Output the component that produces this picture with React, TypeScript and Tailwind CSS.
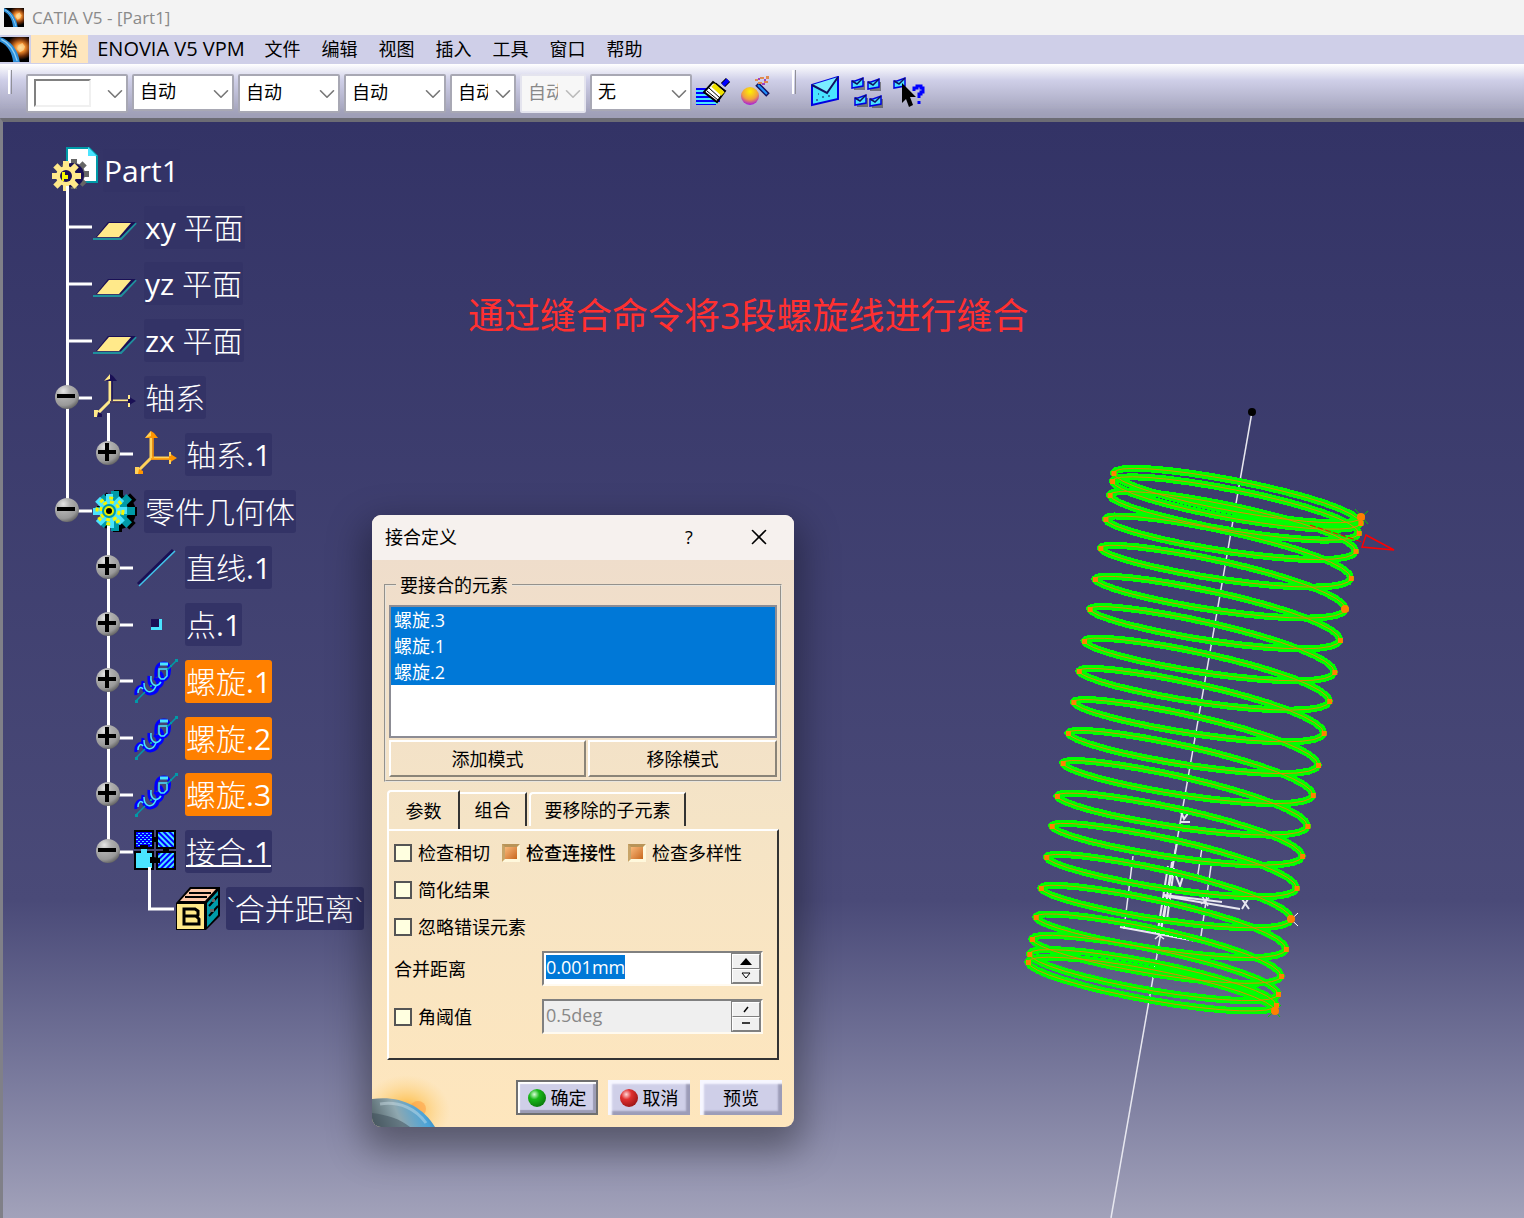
import React, { useEffect, useRef } from 'react';
import { ChevronDown, X } from 'lucide-react';
import clsx from 'clsx';

const MENU_ITEMS = ['文件', '编辑', '视图', '插入', '工具', '窗口', '帮助'];

type IconName = 'plane' | 'axis' | 'axisActive' | 'body' | 'line' | 'point' | 'helix' | 'join' | 'param' | 'part';

interface TreeNode {
  text: string;
  suffix?: string;
  prefix?: string;
  icon: IconName;
  // one entry per indent column, drawn left to right
  guides: ('full' | 'half' | 'none')[];
  toggle?: 'plus' | 'minus';
  opens?: boolean;
  selected?: boolean;
  underline?: boolean;
}

const TREE: TreeNode[] = [
  { text: '', prefix: 'Part1', icon: 'part', guides: [], opens: true },
  { prefix: 'xy ', text: '平面', icon: 'plane', guides: ['full'] },
  { prefix: 'yz ', text: '平面', icon: 'plane', guides: ['full'] },
  { prefix: 'zx ', text: '平面', icon: 'plane', guides: ['full'] },
  { text: '轴系', icon: 'axis', guides: ['full'], toggle: 'minus', opens: true },
  { text: '轴系', suffix: '.1', icon: 'axisActive', guides: ['full', 'half'], toggle: 'plus' },
  { text: '零件几何体', icon: 'body', guides: ['half'], toggle: 'minus', opens: true },
  { text: '直线', suffix: '.1', icon: 'line', guides: ['none', 'full'], toggle: 'plus' },
  { text: '点', suffix: '.1', icon: 'point', guides: ['none', 'full'], toggle: 'plus' },
  { text: '螺旋', suffix: '.1', icon: 'helix', guides: ['none', 'full'], toggle: 'plus', selected: true },
  { text: '螺旋', suffix: '.2', icon: 'helix', guides: ['none', 'full'], toggle: 'plus', selected: true },
  { text: '螺旋', suffix: '.3', icon: 'helix', guides: ['none', 'full'], toggle: 'plus', selected: true },
  { text: '接合', suffix: '.1', icon: 'join', guides: ['none', 'half'], toggle: 'minus', opens: true, underline: true },
  { text: '`合并距离`', icon: 'param', guides: ['none', 'none', 'half'] },
];

const AppLogo = ({ className }: { className?: string }) => (
  <svg viewBox="0 0 22 21" className={className} preserveAspectRatio="none" aria-hidden="true">
    <defs>
      <radialGradient id="sun" cx="0.7" cy="0.42" r="0.5">
        <stop offset="0" stopColor="#fff3c4" />
        <stop offset="0.35" stopColor="#f08a2c" />
        <stop offset="0.7" stopColor="#6b2c08" />
        <stop offset="1" stopColor="#000" />
      </radialGradient>
    </defs>
    <rect width="22" height="21" fill="#000" />
    <rect width="22" height="21" fill="url(#sun)" />
    <path d="M0 4 C6 6 10 12 12 21 L0 21Z" fill="#000" />
    <path d="M0 0 C8 3 14 11 15 21 L10 21 C9 13 6 7 0 4Z" fill="#2f8fd8" />
    <path d="M1 2 C7 5 11 12 13 20" stroke="#8fd0f5" fill="none" />
    <path d="M14 7l3-2 2 3-1 3-3 2-2-3z" fill="#ffd890" opacity="0.7" />
  </svg>
);

const gearTeeth = [0, 45, 90, 135, 180, 225, 270, 315];

const PartIcon = () => (
  <svg width="46" height="46" viewBox="0 0 46 46" className="-mt-1 shrink-0" aria-hidden="true">
    <path d="M15 3H37L45 11V37H15Z" fill="#fff" stroke="#009aa8" strokeWidth="2" />
    <path d="M36 2V11H45Z" fill="#4ae4ff" />
    <g fill="#666">
      <circle cx="22" cy="29" r="11" />
      {gearTeeth.map((a) => (
        <rect key={a} x="19" y="14" width="6" height="8" transform={`rotate(${a} 22 29)`} />
      ))}
    </g>
    <circle cx="20" cy="30" r="12" fill="#1a1055" />
    <g fill="#ffe98a">
      <circle cx="14" cy="31" r="10" />
      {gearTeeth.map((a) => (
        <rect key={a} x="11" y="16" width="6" height="8" transform={`rotate(${a} 14 31)`} />
      ))}
    </g>
    <circle cx="14" cy="31" r="6" fill="#1a1055" />
    <path d="M10 27h3v3h3v4h-4v2h-2z" fill="#f5f500" />
  </svg>
);

const AxisIcon = ({ main, tip }: { main: string; tip: string }) => (
  <svg width="43" height="45" viewBox="0 0 43 45" className="-mt-1 shrink-0" aria-hidden="true">
    <path d="M17 5V28H36M17 28L5 40" stroke={main} strokeWidth="3" fill="none" />
    <path d="M19 8V28M17 29H36" stroke={tip} strokeWidth="1.5" fill="none" />
    <path d="M11 8L15 3L17 1L20 3L24 8Z" fill={tip} />
    <path d="M11 8L17 1V6Z" fill={main} />
    <path d="M35 22V34L38 31L43 28L38 25Z" fill={tip} />
    <path d="M35 22h2v4h-2zM35 30h2v4h-2z" fill={main} />
    <path d="M1 37H5V44H1Z" fill={main} />
    <path d="M5 39L9 41V44H4Z" fill={tip} />
  </svg>
);

const BodyIcon = () => (
  <svg width="44" height="44" viewBox="0 0 44 44" className="shrink-0" aria-hidden="true">
    <g fill="#000">
      <circle cx="26" cy="23" r="17" />
      {gearTeeth.map((a) => (
        <rect key={a} x="21" y="1" width="9" height="10" transform={`rotate(${a} 25 22)`} />
      ))}
    </g>
    <g fill="#009aa8">
      <circle cx="21" cy="22" r="14" />
      {gearTeeth.map((a) => (
        <rect key={a} x="18" y="2" width="8" height="9" transform={`rotate(${a} 22 22)`} />
      ))}
    </g>
    <g fill="#4ae4ff">
      <circle cx="17" cy="22" r="11" />
      {gearTeeth.map((a) => (
        <rect key={a} x="13" y="5" width="7" height="9" transform={`rotate(${a} 17 22)`} />
      ))}
    </g>
    <circle cx="17" cy="22" r="13" fill="none" stroke="#f5f500" strokeWidth="3" strokeDasharray="4 6" />
    <circle cx="17" cy="22" r="9" fill="none" stroke="#f5f500" strokeWidth="3" strokeDasharray="4 3" />
    <circle cx="16" cy="22" r="7" fill="#009aa8" />
    <circle cx="16" cy="22" r="5" fill="#e8f000" />
    <circle cx="16" cy="22" r="3" fill="#000" />
  </svg>
);

const HelixIcon = () => (
  <svg width="44" height="44" viewBox="0 0 44 44" className="shrink-0" aria-hidden="true">
    <g fill="none" stroke="#0000ff" strokeWidth="3">
      <path d="M2 36C1 30 5 26 9 28" />
      <path d="M9 22C7 32 14 37 20 34C26 31 25 22 20 19" />
      <path d="M15 17C14 27 19 31 25 28C30 25 30 17 26 13" />
      <path d="M22 18C21 8 24 4 30 4C36 4 36 10 35 15C33 22 26 23 23 19" />
    </g>
    <g fill="none" stroke="#4ae4ff" strokeWidth="1.5">
      <path d="M4 34C4 29 7 27 9 30" />
      <path d="M10 24C10 34 18 36 22 27" />
      <path d="M17 17C16 27 23 29 27 23" />
      <path d="M25 10H33V17L30 20H27L25 18Z" />
      <path d="M26 5H34" strokeWidth="3" />
    </g>
    <path d="M2 42L11 33M33 11L43 1" stroke="#009aa8" strokeWidth="1.5" />
    <path d="M1 41h3v3h-3zM41 0h3v3h-3zM36 6h2v2h-2zM16 26h2v2h-2z" fill="#009aa8" />
  </svg>
);

const JoinIcon = () => (
  <svg width="42" height="42" viewBox="0 0 42 42" className="-mt-1 shrink-0" aria-hidden="true">
    <defs>
      <pattern id="hatch" width="4" height="4" patternUnits="userSpaceOnUse" patternTransform="rotate(45)">
        <rect width="4" height="4" fill="#0000ff" />
        <rect width="2" height="4" fill="#4ae4ff" />
      </pattern>
      <pattern id="hatchBack" width="4" height="4" patternUnits="userSpaceOnUse" patternTransform="rotate(-45)">
        <rect width="4" height="4" fill="#0000ff" />
        <rect width="2" height="4" fill="#4ae4ff" />
      </pattern>
      <pattern id="dots" width="4" height="4" patternUnits="userSpaceOnUse">
        <rect width="4" height="4" fill="#0000ff" />
        <rect width="2" height="1" fill="#4ae4ff" />
        <rect x="2" y="2" width="2" height="1" fill="#4ae4ff" />
      </pattern>
    </defs>
    <g stroke="#000" strokeWidth="2">
      <rect x="1" y="2" width="18" height="17" fill="url(#dots)" />
      <rect x="23" y="2" width="18" height="17" fill="url(#hatchBack)" />
      <rect x="1" y="23" width="18" height="17" fill="#4ae4ff" />
      <rect x="23" y="23" width="18" height="17" fill="url(#hatch)" />
    </g>
    <path d="M19 8h4v5h-4zM19 28h-3v6h10v-5zM29 19h6v4h-6z" fill="#000" />
    <path d="M7 20h6v5h-6z" fill="#4ae4ff" />
    <path d="M6 16h8v4h-8z" fill="#000" />
  </svg>
);

const ParamIcon = () => (
  <svg width="45" height="45" viewBox="0 0 45 45" className="shrink-0" aria-hidden="true">
    <path d="M1 17L15 1H45V30L31 44H1Z" fill="#000" />
    <path d="M5 15L16 3H41L30 15Z" fill="#ffc8a8" />
    <path d="M14 7H36M10 11H32" stroke="#000" strokeWidth="2" />
    <path d="M32 17L43 5V29L32 41Z" fill="#009aa8" />
    <path d="M34 20L43 10M34 30L43 20" stroke="#000" strokeWidth="2" />
    <path d="M35 23h4v3h-4zM37 13h3v3h-3z" fill="#666" />
    <rect x="2" y="18" width="27" height="25" fill="#ffe98a" />
    <path d="M9 23H20L23 25V29L22 31L24 33V38H9Z" fill="none" stroke="#000" strokeWidth="3" />
    <path d="M10 30H22" stroke="#000" strokeWidth="3" />
  </svg>
);

const TreeIcon = ({ name }: { name: IconName }) => {
  switch (name) {
    case 'part':
      return <PartIcon />;
    case 'axis':
      return <AxisIcon main="#ffe98a" tip="#1a1055" />;
    case 'axisActive':
      return <AxisIcon main="#ffd25a" tip="#ff9500" />;
    case 'body':
      return <BodyIcon />;
    case 'helix':
      return <HelixIcon />;
    case 'join':
      return <JoinIcon />;
    case 'param':
      return <ParamIcon />;
    case 'plane':
      return (
        <svg width="44" height="20" viewBox="0 0 44 20" className="mt-2 shrink-0" aria-hidden="true">
          <path d="M0 18H28L43 2" stroke="#1f8f9c" strokeWidth="2" fill="none" />
          <path d="M3 16L15 1H43L28 16Z" fill="#1a1055" />
          <path d="M4 16L16 2H38L26 16Z" fill="#ffe98a" />
        </svg>
      );
    case 'line':
      return (
        <svg width="43" height="44" viewBox="0 0 43 44" className="shrink-0" aria-hidden="true">
          <path d="M4 38L39 4" stroke="#1a1055" strokeWidth="3" />
          <path d="M5 40L41 5" stroke="#3fc4ea" strokeWidth="1.5" />
        </svg>
      );
    case 'point':
      return (
        <svg width="43" height="44" viewBox="0 0 43 44" className="shrink-0" aria-hidden="true">
          <rect x="17" y="16" width="11" height="11" fill="#4ae4ff" />
          <rect x="17" y="16" width="8" height="8" fill="#1a1055" />
        </svg>
      );
  }
};

const Toggle = ({ kind, label }: { kind: 'plus' | 'minus'; label: string }) => (
  <button aria-label={label} className="absolute left-2 top-1/2 -mt-px size-6 -translate-y-1/2">
    <svg viewBox="0 0 24 24" aria-hidden="true">
      <defs>
        <radialGradient id="ball" cx="0.35" cy="0.25" r="0.8">
          <stop offset="0" stopColor="#e6e6e6" />
          <stop offset="0.35" stopColor="#b0b0b0" />
          <stop offset="0.75" stopColor="#999" />
          <stop offset="1" stopColor="#606060" />
        </radialGradient>
      </defs>
      <circle cx="12" cy="12" r="12" fill="url(#ball)" />
      <path d={kind === 'plus' ? 'M2 11H20M11 2V20' : 'M2 11H20'} stroke="#000" strokeWidth="4" />
    </svg>
  </button>
);

const TreeRow = ({ node }: { node: TreeNode }) => {
  const last = node.guides.length - 1;
  const name = `${node.prefix ?? ''}${node.text}${node.suffix ?? ''}`;
  return (
    <li className="flex flex-1 items-center">
      {node.guides.map((guide, i) => (
        <span key={i} className="relative w-[41px] shrink-0 self-stretch">
          {guide !== 'none' && (
            <span className={clsx('absolute left-[19px] top-0 w-[3px] bg-white', guide === 'full' ? 'h-full' : 'h-1/2')} />
          )}
          {i === last && (
            <span className="absolute left-[19px] top-1/2 h-[3px] w-[26px] -translate-y-1/2 bg-white" />
          )}
          {i === last && node.toggle && <Toggle kind={node.toggle} label={name} />}
        </span>
      ))}
      <span className="relative flex w-[50px] shrink-0 items-center self-stretch pl-[5px]">
        <TreeIcon name={node.icon} />
        {node.opens && <span className="absolute bottom-0 left-[19px] h-[13px] w-[3px] bg-white" />}
      </span>
      <span className="w-[6px] shrink-0" />
      <span
        className={clsx(
          'h-[43px] whitespace-pre rounded-[3px] px-px text-[30px] leading-[43px] font-light text-white',
          node.selected ? 'bg-[#ff8000]' : 'bg-[#333366]',
          node.underline && 'underline decoration-2 underline-offset-2'
        )}
      >
        {node.prefix && <span className="font-normal">{node.prefix}</span>}
        {node.text}
        {node.suffix && <span className="font-normal">{node.suffix}</span>}
      </span>
    </li>
  );
};

// x extremes of every turn on screen, top to bottom
const RIGHT_Y = [517, 523, 533, 551, 578, 609, 640, 672, 701, 733, 765, 795, 826, 856, 888, 919, 949, 976, 994, 1005, 1011];
const LEFT_Y = [473, 481, 495, 519, 548, 579, 609, 641, 671, 702, 733, 763, 796, 826, 857, 888, 917, 939, 954, 962];
const HALF_WIDTH = 124;
const TILT = 22;
const MINOR = 17;

const knots = RIGHT_Y.flatMap((y, i) => (i < LEFT_Y.length ? [y - TILT, LEFT_Y[i] + TILT] : [y - TILT]));
const axisX = (y: number) => 1252 - 0.175 * (y - 412);

const helixPoints: string[] = [];
for (let i = 0; i < knots.length - 1; i++) {
  for (let s = 0; s < 16; s++) {
    const t = s / 16;
    const cy = knots[i] + (knots[i + 1] - knots[i]) * t;
    const a = (i + t) * Math.PI;
    const x = axisX(cy) + HALF_WIDTH * Math.cos(a);
    const y = cy + TILT * Math.cos(a) + MINOR * Math.sin(a);
    helixPoints.push(`${x.toFixed(1)},${y.toFixed(1)}`);
  }
}
const HELIX = `M${helixPoints.join('L')}L1274,1011`;

const Spring = () => (
  <svg
    width="410"
    height="818"
    viewBox="1000 400 410 818"
    className="absolute left-[997px] top-[278px]"
    role="img"
    aria-label="Part1"
  >
    <g stroke="#e8e8f0" strokeWidth="1.5" fill="none">
      <path d="M1252 412L1111 1218" />
      <path d="M1133 856L1124 929M1202 848L1197 880M1211 866L1201 936" />
      <path d="M1120 927L1196 941" strokeWidth="2" />
      <path d="M1164 895L1222 902M1164 896L1240 909" strokeWidth="2" />
      <path d="M1177 843L1160 933M1172 862L1164 918M1168 866L1158 930M1174 868L1167 920" strokeWidth="2" />
      <path d="M1242 899L1249 909M1248 899L1242 909M1181 812L1184 819L1189 812M1180 822H1190M1176 876L1180 886L1183 876" strokeWidth="2" />
      <path d="M1155 932L1164 939M1163 932L1155 939M1202 896L1208 906M1210 897L1201 904" />
    </g>
    <circle cx="1252" cy="412" r="4" fill="#000" />
    <path d="M1355 509L1368 524M1368 511L1356 522M1268 1017L1281 1005M1280 1017L1270 1005" stroke="#00d000" />
    <path d="M1284 913L1298 926M1298 913L1286 924" stroke="#fff" />
    <path d={HELIX} fill="none" stroke="#00ff00" strokeWidth="7" strokeLinejoin="round" shapeRendering="crispEdges" />
    <path d={HELIX} fill="none" stroke="#e08800" strokeWidth="1" />
    <path d="M1310 525L1362 542" stroke="#ff0000" fill="none" strokeDasharray="6 2" />
    <path d="M1366 535L1394 550L1362 547Z" stroke="#ff0000" strokeWidth="1.5" fill="none" />
    <g fill="#ff8000">
      {RIGHT_Y.map((y) => (
        <rect key={y} x={axisX(y - TILT) + HALF_WIDTH - 2} y={y - 2} width="5" height="5" />
      ))}
      {LEFT_Y.map((y) => (
        <rect key={y} x={axisX(y + TILT) - HALF_WIDTH - 2} y={y - 2} width="5" height="5" />
      ))}
      <circle cx="1361" cy="517" r="4" />
      <circle cx="1345" cy="609" r="4" />
      <circle cx="1291" cy="919" r="4" />
      <circle cx="1275" cy="1011" r="4" />
    </g>
  </svg>
);

interface ComboProps {
  label: string;
  value: string;
  narrow?: boolean;
  flat?: boolean;
  disabled?: boolean;
  swatch?: boolean;
}

const Combo = ({ label, value, narrow, flat, disabled, swatch }: ComboProps) => (
  <div className={clsx('relative shrink-0', narrow ? 'w-[66px]' : 'w-[102px]', flat ? 'h-[37px]' : 'h-[39px]')}>
    <select
      aria-label={label}
      disabled={disabled}
      className={clsx(
        'size-full appearance-none rounded-[2px] border-2 pl-[6px] pb-[3px] text-[18px] leading-6',
        narrow ? 'pr-[26px]' : 'pr-[30px]',
        disabled ? 'border-[#e4e4ee] bg-[#f7f7f7] text-[#888]' : 'border-[#a8a8b4] bg-white text-black'
      )}
    >
      <option>{value}</option>
    </select>
    {swatch && (
      <span className="absolute left-2 top-[5px] h-7 w-[57px] border-2 border-b-[#f0f0f0] border-l-[#808080] border-r-[#f0f0f0] border-t-[#808080] bg-white" />
    )}
    <ChevronDown
      className={clsx('pointer-events-none absolute right-0 top-[7px] size-[26px]', disabled ? 'text-[#bbb]' : 'text-[#777]')}
      strokeWidth={1.5}
    />
  </div>
);

const BrushIcon = () => (
  <svg width="36" height="30" viewBox="0 0 36 30" aria-hidden="true">
    <path d="M0 12H14M0 16H16M0 20H20M0 24H24M0 27H20" stroke="#0000ff" strokeWidth="2" />
    <path d="M0 14H14M0 18H16M0 22H20M0 26H22" stroke="#4ae4ff" strokeWidth="2" />
    <path d="M27 8L32 3" stroke="#000" strokeWidth="6" />
    <path d="M27 8L32 3" stroke="#0000ff" strokeWidth="4" />
    <path d="M17 5L29 14L21 25L8 15Z" fill="#fff" stroke="#000" strokeWidth="2" />
    <path d="M17 8L27 17" stroke="#f0e000" strokeWidth="5" />
    <path d="M13 11L24 21M20 6L29 14M11 14L22 23" stroke="#000" strokeWidth="1" />
  </svg>
);

const WizardIcon = () => (
  <svg width="34" height="32" viewBox="0 0 34 32" aria-hidden="true">
    <defs>
      <radialGradient id="orb" cx="0.5" cy="0.25" r="0.8">
        <stop offset="0" stopColor="#fff200" />
        <stop offset="0.55" stopColor="#f0a040" />
        <stop offset="1" stopColor="#9a00ff" />
      </radialGradient>
    </defs>
    <circle cx="10" cy="20" r="9" fill="url(#orb)" />
    <path d="M17 8L28 19" stroke="#101060" strokeWidth="5" />
    <path d="M18 9L27 18" stroke="#2090ff" strokeWidth="2" />
    <path d="M15 3h3v2h-3zM20 1h4v2h-4zM26 0h3v3h-3zM18 6h4v2h-4zM24 5h4v2h-4z" fill="#e08a50" />
    <path d="M18 2h2v2h-2zM24 3h2v2h-2zM22 7h3v2h-3z" fill="#a040c0" />
  </svg>
);

const Envelope = ({ x, y }: { x: number; y: number }) => (
  <g transform={`translate(${x} ${y})`}>
    <path d="M1 4H4L12 1V9L1 11Z" fill="#4ae4ff" stroke="#0000e0" strokeWidth="1.5" />
    <path d="M1 4L6 7L12 1" fill="none" stroke="#101060" strokeWidth="1.5" />
  </g>
);

const ToolButton = ({ label, children }: { label: string; children: React.ReactNode }) => (
  <button aria-label={label} className="flex h-9 shrink-0 items-center justify-center">
    {children}
  </button>
);

const Toolbar = () => (
  <div className="flex h-[54px] shrink-0 items-start gap-1 overflow-hidden bg-linear-to-b from-white via-[#cfcfe8] via-30% to-[#9c9cb4] pl-2 pt-[10px] shadow-[inset_0_-12px_8px_-8px_#a0a0b8]">
    <span className="-mt-1 mr-[10px] h-6 w-1 shrink-0 border-l-2 border-r border-l-white border-r-[#909098]" />
    <Combo label="填充颜色" value="" swatch />
    <Combo label="透明度" value="自动" flat />
    <Combo label="线宽" value="自动" />
    <Combo label="线型" value="自动" />
    <Combo label="点符号" value="自动" narrow />
    <Combo label="渲染" value="自动" narrow disabled />
    <Combo label="图层" value="无" flat />
    <ToolButton label="格式刷">
      <BrushIcon />
    </ToolButton>
    <span className="shrink-0" />
    <ToolButton label="图形属性向导">
      <WizardIcon />
    </ToolButton>
    <span className="-mt-1 ml-[14px] mr-[10px] h-6 w-1 shrink-0 border-l-2 border-r border-l-white border-r-[#909098]" />
    <ToolButton label="发送">
      <svg width="32" height="32" viewBox="0 0 32 32" aria-hidden="true">
        <path d="M2 9L28 1V23L2 29Z" fill="#4ae4ff" stroke="#0000e0" strokeWidth="2" />
        <path d="M2 9L17 17L28 1" fill="#7becff" stroke="#101060" strokeWidth="2" />
        <path d="M6 24h2M12 21h2M18 20h2M8 18h1" stroke="#1a1055" />
      </svg>
    </ToolButton>
    <span className="shrink-0" />
    <ToolButton label="全部发送">
      <svg width="34" height="34" viewBox="0 0 34 34" aria-hidden="true">
        <path d="M4 6h11v9H4zM20 7h11v9H20zM7 23h11v9H7zM22 24h11v9H22z" fill="#444" opacity="0.6" />
        <Envelope x={1} y={2} />
        <Envelope x={17} y={3} />
        <Envelope x={4} y={19} />
        <Envelope x={19} y={20} />
      </svg>
    </ToolButton>
    <span className="shrink-0" />
    <ToolButton label="这是什么">
      <svg width="36" height="34" viewBox="0 0 36 34" aria-hidden="true">
        <Envelope x={1} y={2} />
        <path d="M10 8V28L14 24L17 32L21 30L18 22H24Z" fill="#000" />
        <path d="M22 16V13H25V11H29V13H31V17H29V19H27V23M27 26V29" fill="none" stroke="#0000ff" strokeWidth="3" />
      </svg>
    </ToolButton>
  </div>
);

const CheckBox = ({ label, checked, strong }: { label: string; checked?: boolean; strong?: boolean }) => (
  <label className={clsx('flex items-center gap-[6px]', strong && 'font-medium')}>
    <input
      type="checkbox"
      defaultChecked={checked}
      className="size-[18px] appearance-none border-2 border-[#555] bg-[#ffffe0] checked:border-[3px] checked:border-b-[#fff8dc] checked:border-l-[#c8a468] checked:border-r-[#fff8dc] checked:border-t-[#b89458] checked:bg-linear-to-br checked:from-[#f8b878] checked:to-[#c86818]"
    />
    {label}
  </label>
);

const SpinField = ({ id, value, disabled }: { id: string; value: string; disabled?: boolean }) => {
  const ref = useRef<HTMLInputElement>(null);

  useEffect(() => {
    if (!disabled) {
      ref.current?.focus();
      ref.current?.select();
    }
  }, [disabled]);

  return (
    <div
      className={clsx(
        'flex h-[35px] w-[221px] border-2 border-b-[#fffaf0] border-l-[#808080] border-r-[#fffaf0] border-t-[#808080]',
        disabled ? 'bg-[#efefef]' : 'bg-white'
      )}
    >
      <input
        ref={ref}
        id={id}
        type="text"
        defaultValue={value}
        disabled={disabled}
        className="h-7 min-w-0 flex-1 bg-transparent px-[2px] text-[18px] leading-[26px] outline-none selection:bg-[#0078d7] selection:text-white disabled:text-[#888]"
      />
      <div className="flex w-[30px] flex-col border border-[#808080] bg-[#808080]">
        {['up', 'down'].map((dir) => (
          <button
            key={dir}
            aria-label={dir}
            disabled={disabled}
            className="flex flex-1 items-center justify-center border border-b-[#808080] border-l-white border-r-[#808080] border-t-white bg-[#f0f0f0]"
          >
            <svg width="12" height="7" viewBox="0 0 12 7" aria-hidden="true">
              {disabled ? (
                <path d={dir === 'up' ? 'M4 6L8 1' : 'M2 3H10'} stroke="#000" strokeWidth="1.5" />
              ) : (
                <path d={dir === 'up' ? 'M0 7L6 0L12 7Z' : 'M2 1H10L6 6Z'} fill={dir === 'up' ? '#000' : '#fff'} stroke="#000" strokeWidth={dir === 'up' ? 0 : 1} />
              )}
            </svg>
          </button>
        ))}
      </div>
    </div>
  );
};

const ActionButton = ({ label, ball, primary }: { label: string; ball?: 'green' | 'red'; primary?: boolean }) => (
  <button
    className={clsx(
      'flex h-[35px] w-[82px] items-center justify-center gap-[5px] bg-[#cfcfe8]',
      primary
        ? 'border-2 border-[#707070] shadow-[inset_2px_2px_1px_#fff,inset_-3px_-3px_1px_#9c9cb4]'
        : 'shadow-[inset_4px_4px_2px_#f6f6ff,inset_-4px_-4px_2px_#9c9cb8]'
    )}
  >
    {ball && (
      <span
        className={clsx(
          'size-[18px] rounded-full',
          ball === 'green'
            ? 'bg-[radial-gradient(circle_at_35%_30%,#d8ffd8_0%,#18b818_30%,#045c04_100%)]'
            : 'bg-[radial-gradient(circle_at_35%_30%,#ffd8d8_0%,#e03030_30%,#7c0808_100%)]'
        )}
      />
    )}
    {label}
  </button>
);

const JoinDialog = () => (
  <section
    role="dialog"
    aria-label="接合定义"
    className="absolute left-[369px] top-[393px] w-[422px] overflow-hidden rounded-[9px] bg-linear-to-b from-[#eedccc] via-[#f5e4c6] via-50% to-[#fee6bd] text-[18px] leading-6 text-black shadow-[0_16px_36px_8px_rgba(0,0,0,0.35)]"
  >
    <header className="flex h-[45px] items-center bg-[#f6f1ee] pb-[2px] pl-[13px]">
      <h2 className="flex-1">接合定义</h2>
      <button aria-label="帮助" className="w-[70px] text-center">?</button>
      <button aria-label="关闭" className="flex w-[70px] justify-center">
        <X className="size-[26px]" strokeWidth={1.5} />
      </button>
    </header>

    <div className="px-3 pt-[13px]">
      <fieldset className="border-2 border-[#e8e4dc] px-[3px] pb-[3px] [border-style:groove]">
        <legend className="ml-[7px] px-1">要接合的元素</legend>
        <ul className="mt-2 h-[133px] border-2 border-[#8c8c94] bg-white" role="listbox" aria-label="要接合的元素">
          {['螺旋.3', '螺旋.1', '螺旋.2'].map((item) => (
            <li key={item} role="option" aria-selected="true" className="h-[26px] bg-[#0078d7] pl-[3px] leading-[26px] text-white">
              {item}
            </li>
          ))}
        </ul>
        <div className="mt-[2px] grid grid-cols-[197px_1fr] gap-[2px]">
          {['添加模式', '移除模式'].map((label) => (
            <button
              key={label}
              className="h-[37px] border-2 border-b-[#8a8478] border-l-white border-r-[#8a8478] border-t-white"
            >
              {label}
            </button>
          ))}
        </div>
      </fieldset>
    </div>

    <div className="px-[15px] pt-2">
      <div role="tablist" className="flex items-end">
        <button role="tab" aria-selected="true" className="h-[39px] w-[73px] rounded-tl border-2 border-b-0 border-l-white border-r-[#333] border-t-white">
          参数
        </button>
        <button role="tab" aria-selected="false" className="mb-[3px] h-[34px] w-[67px] border-2 border-b-0 border-l-0 border-r-[#333] border-t-white">
          组合
        </button>
        <button role="tab" aria-selected="false" className="mb-[3px] ml-[2px] h-[34px] w-[157px] rounded-tl border-2 border-b-0 border-l-white border-r-[#333] border-t-white">
          要移除的子元素
        </button>
      </div>
      <div className="flex flex-col gap-[11px] border-2 border-b-[#333] border-l-white border-r-[#333] border-t-white pb-[24px] pl-[5px] pr-[14px] pt-[9px]">
        <div className="flex h-[26px] gap-3">
          <CheckBox label="检查相切" />
          <CheckBox label="检查连接性" checked strong />
          <CheckBox label="检查多样性" checked />
        </div>
        <div className="flex h-[26px]">
          <CheckBox label="简化结果" />
        </div>
        <div className="flex h-[26px]">
          <CheckBox label="忽略错误元素" />
        </div>
        <div className="flex flex-col gap-[13px]">
          <div className="flex items-center justify-between">
            <label htmlFor="merge">合并距离</label>
            <SpinField id="merge" value="0.001mm" />
          </div>
          <div className="flex items-center justify-between">
            <CheckBox label="角阈值" />
            <SpinField id="angle" value="0.5deg" disabled />
          </div>
        </div>
      </div>
    </div>

    <footer className="relative flex justify-end gap-[10px] pb-3 pr-3 pt-5">
      <svg width="80" height="60" viewBox="0 0 80 60" className="absolute bottom-0 left-0" aria-hidden="true">
        <defs>
          <radialGradient id="glow">
            <stop offset="0" stopColor="#ff9a30" />
            <stop offset="0.3" stopColor="#fdc868" />
            <stop offset="1" stopColor="#fdd890" stopOpacity="0" />
          </radialGradient>
          <linearGradient id="planet" x1="0" y1="0.6" x2="1" y2="0.4">
            <stop offset="0" stopColor="#5a6a70" />
            <stop offset="0.4" stopColor="#8fa8b0" />
            <stop offset="0.8" stopColor="#4aa4da" />
            <stop offset="1" stopColor="#2f78b0" />
          </linearGradient>
        </defs>
        <ellipse cx="34" cy="44" rx="44" ry="36" fill="url(#glow)" />
        <circle cx="46" cy="42" r="8" fill="#ff9a40" opacity="0.5" />
        <path d="M0 32C26 28 50 38 63 60H0Z" fill="url(#planet)" />
        <path d="M0 46C16 48 28 52 38 60H0Z" fill="#3c4c58" opacity="0.5" />
        <path d="M8 37C28 34 44 42 54 56" stroke="#d8e8f0" strokeWidth="3" fill="none" opacity="0.4" />
      </svg>
      <ActionButton label="确定" ball="green" primary />
      <ActionButton label="取消" ball="red" />
      <ActionButton label="预览" />
    </footer>
  </section>
);

const App: React.FC = () => {
  return (
    <div className="flex min-h-screen flex-col font-['Open_Sans','Noto_Sans_CJK_SC',sans-serif] text-[18px] leading-6">
      {/* Title bar */}
      <header className="flex h-[35px] shrink-0 items-center gap-2 bg-[#f3f3f3] pl-1">
        <AppLogo className="h-[19px] w-5" />
        <h1 className="text-[17px] text-[#8a8a8a]">CATIA V5 - [Part1]</h1>
      </header>

      {/* Menu bar */}
      <nav className="flex h-[29px] shrink-0 items-stretch bg-[#cfcfe8] pb-px text-black">
        <AppLogo className="mr-[2px] mt-[2px] h-[25px] w-[29px]" />
        <button className="w-[57px] bg-[#fee6bd]">开始</button>
        <button className="w-[166px] whitespace-nowrap text-[20px]">ENOVIA V5 VPM</button>
        {MENU_ITEMS.map((item) => (
          <button key={item} className="w-[57px]">
            {item}
          </button>
        ))}
      </nav>

      <Toolbar />

      {/* 3D view */}
      <main className="relative flex-1 overflow-hidden border-l-[3px] border-t-4 border-l-[#808088] border-t-[#6c6c74] bg-linear-to-b from-[#333366] via-[#4a4a78] via-[71%] to-[#a2a2ba]">
        <ul className="box-content flex h-[795px] flex-col pl-11 pt-5">
          {TREE.map((node, i) => (
            <TreeRow key={i} node={node} />
          ))}
        </ul>
        <p className="absolute left-[465px] top-[167px] whitespace-nowrap text-[36px] leading-[54px] text-[#ff3030]">
          通过缝合命令将3段螺旋线进行缝合
        </p>
        <Spring />
        <JoinDialog />
      </main>
    </div>
  );
};

export default App;
